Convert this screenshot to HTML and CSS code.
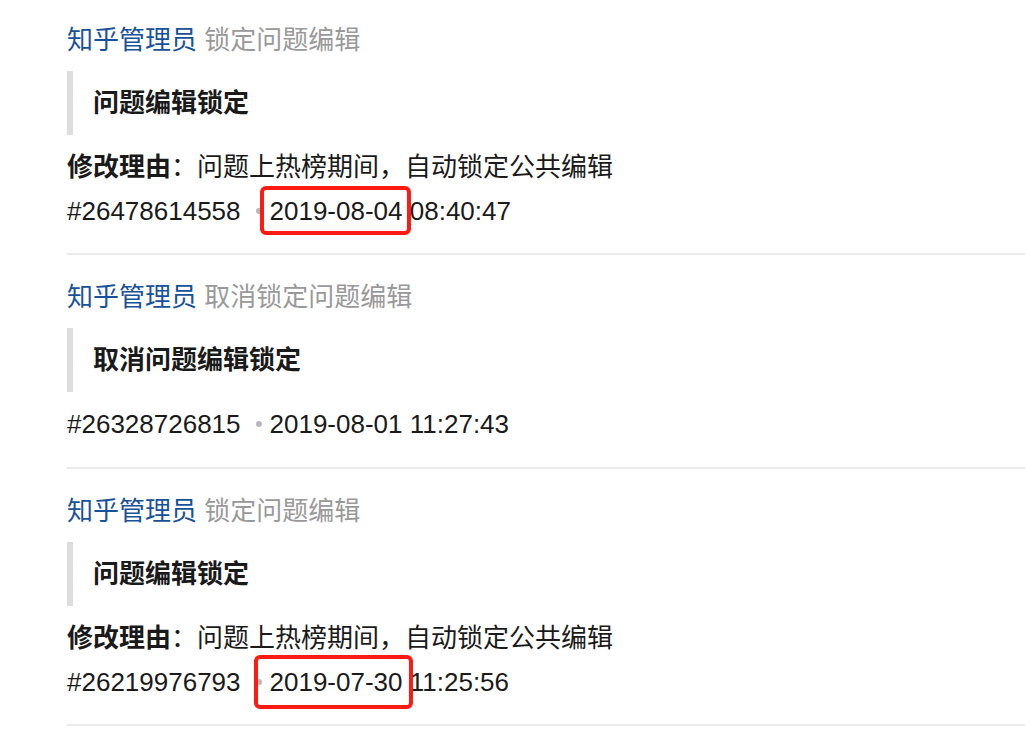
FILE: index.html
```html
<!DOCTYPE html>
<html lang="zh-CN">
<head>
    <meta charset="UTF-8">
    <meta name="viewport" content="width=device-width, initial-scale=1.0">
    <title>问题日志</title>
    <link rel="stylesheet" href="styles.css">
</head>
<body>
    <div class="log-list">
        <div class="log-item">
            <div class="log-title"><a class="log-user" href="#">知乎管理员</a> <span class="log-action">锁定问题编辑</span></div>
            <blockquote class="log-quote">问题编辑锁定</blockquote>
            <div class="log-body">
                <div class="log-reason"><b>修改理由</b>：问题上热榜期间，自动锁定公共编辑</div>
                <div class="log-meta">#26478614558<span class="log-dot"></span><span class="log-date mark mark-1">2019-08-04</span> 08:40:47</div>
            </div>
        </div>

        <div class="log-item">
            <div class="log-title"><a class="log-user" href="#">知乎管理员</a> <span class="log-action">取消锁定问题编辑</span></div>
            <blockquote class="log-quote">取消问题编辑锁定</blockquote>
            <div class="log-body">
                <div class="log-meta">#26328726815<span class="log-dot"></span><span class="log-date">2019-08-01</span> 11:27:43</div>
            </div>
        </div>

        <div class="log-item">
            <div class="log-title"><a class="log-user" href="#">知乎管理员</a> <span class="log-action">锁定问题编辑</span></div>
            <blockquote class="log-quote">问题编辑锁定</blockquote>
            <div class="log-body">
                <div class="log-reason"><b>修改理由</b>：问题上热榜期间，自动锁定公共编辑</div>
                <div class="log-meta">#26219976793<span class="log-dot"></span><span class="log-date mark mark-2">2019-07-30</span> 11:25:56</div>
            </div>
        </div>
    </div>
</body>
</html>
```

FILE: styles.css
```css
body {
    margin: 0;
    background: #ffffff;
    color: #1a1a1a;
    font-family: "Liberation Sans", "Noto Sans CJK SC", sans-serif;
    font-size: 26px;
    overflow: hidden;
}

.log-list {
    padding-left: 67px;
}

.log-item {
    padding: 24px 0 20px;
    border-bottom: 2px solid #ebebeb;
}

.log-item:first-child {
    padding-top: 22px;
}

.log-item:nth-child(2) {
    padding-bottom: 21px;
}

.log-title {
    line-height: 36px;
}

.log-user {
    color: #175199;
    text-decoration: none;
}

.log-action {
    color: #999999;
}

/* 引用块 : 왼쪽 회색 막대 */
.log-quote {
    margin: 13px 0 0;
    padding: 14px 0 14px 20px;
    border-left: 6px solid #dddddd;
    line-height: 36px;
    font-weight: bold;
}

.log-body {
    margin-top: 10px;
    line-height: 44px;
}

.log-reason b {
    font-weight: bold;
}

.log-dot {
    display: inline-block;
    width: 6px;
    height: 6px;
    margin: 0 8px 0 15px;
    border-radius: 50%;
    background: #b8b8b8;
    vertical-align: 6px;
}

.log-date {
    position: relative;
}

/* 빨간 표시 상자 (스크린샷 위 주석) */
.mark::after {
    content: "";
    position: absolute;
    border: 4px solid #ff1a14;
    border-radius: 6px;
    background: transparent;
}

.mark-1::after {left: -10px; right: -8px; top: -10px; bottom: -9px;}
.mark-2::after {left: -16px; right: -10px; top: -12px; bottom: -12px;}
```
